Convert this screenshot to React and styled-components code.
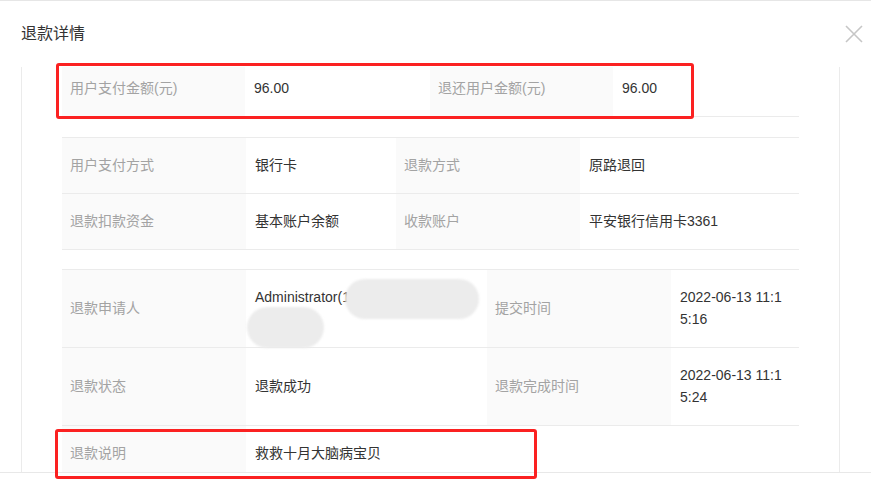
import React from "react";
import styled, { createGlobalStyle } from "styled-components";

const GlobalStyle = createGlobalStyle`
  html, body {
    margin: 0;
    padding: 0;
    background: #fff;
  }
  body {
    font-family: "Liberation Sans", "Noto Sans CJK SC", sans-serif;
    overflow: hidden;
  }
`;

const amountTable = {
  cols: "183px 185px 183px 186px",
  offset: -7,
  rows: [
    [
      ["用户支付金额(元)", "96.00"],
      ["退还用户金额(元)", "96.00"],
    ],
  ],
};

const methodTable = {
  cols: "184px 150px 184px 219px",
  offset: 20,
  rows: [
    [
      ["用户支付方式", "银行卡"],
      ["退款方式", "原路退回"],
    ],
    [
      ["退款扣款资金", "基本账户余额"],
      ["收款账户", "平安银行信用卡3361"],
    ],
  ],
};

// the applicant's number is masked in the screenshot
const Applicant = () => (
  <TwoLines>
    Administrator(1
    <Blur left={99} top={9} w={134} h={40} />
    <Blur left={1} top={37} w={77} h={41} />
  </TwoLines>
);

const statusTable = {
  cols: "184px 241px 184px 128px",
  offset: 19,
  rows: [
    [
      ["退款申请人", <Applicant key="a" />],
      ["提交时间", "2022-06-13 11:15:16"],
    ],
    [
      ["退款状态", "退款成功"],
      ["退款完成时间", "2022-06-13 11:15:24"],
    ],
    [["退款说明", "救救十月大脑病宝贝"]],
  ],
};

const InfoTable = ({ table }) => (
  <Table offset={table.offset}>
    {table.rows.map((row, i) => (
      <Row key={i} cols={table.cols}>
        {row.map(([label, value]) => (
          <React.Fragment key={label}>
            <Label>{label}</Label>
            <Value>{value}</Value>
          </React.Fragment>
        ))}
      </Row>
    ))}
  </Table>
);

export default function App() {
  return (
    <Modal>
      <GlobalStyle />
      <Header>
        <Title>退款详情</Title>
        <CloseButton aria-label="close">
          <svg width="18" height="18" viewBox="0 0 18 18">
            <path
              d="M1 1 L17 17 M17 1 L1 17"
              stroke="#c6c6c6"
              strokeWidth="1.6"
              fill="none"
            />
          </svg>
        </CloseButton>
      </Header>
      <Body>
        <Content>
          <InfoTable table={amountTable} />
          <InfoTable table={methodTable} />
          <InfoTable table={statusTable} />
        </Content>
      </Body>
      <Footer />
      <Mark left={56} top={62} w={638} h={56} />
      <Mark left={55} top={428} w={482} h={50} />
    </Modal>
  );
}

const Modal = styled.div`
  position: relative;
  width: 871px;
  height: 481px;
  border-top: 1px solid #e6e6e6;
  box-sizing: border-box;
  display: flex;
  flex-direction: column;
  overflow: hidden;
`;

const Header = styled.div`
  height: 66px;
  flex-shrink: 0;
  display: flex;
  align-items: center;
  justify-content: space-between;
  padding: 0 8px 1px 21px;
  box-sizing: border-box;
`;

const Title = styled.div`
  font-size: 16px;
  color: #333;
  line-height: 22px;
`;

const CloseButton = styled.button`
  border: none;
  background: none;
  padding: 0;
  width: 18px;
  height: 18px;
  display: flex;
  cursor: pointer;
`;

const Body = styled.div`
  margin-left: 21px;
  width: 819px;
  height: 405px;
  flex-shrink: 0;
  border-left: 1px solid #ebebeb;
  border-right: 1px solid #ebebeb;
  box-sizing: border-box;
  overflow: hidden;
`;

const Content = styled.div`
  padding-left: 40px;
  width: 777px;
  box-sizing: border-box;
`;

const Table = styled.div`
  margin-top: ${({ offset }) => offset}px;
  border-top: 1px solid #ebebeb;
  width: 737px;
`;

const Row = styled.div`
  display: grid;
  grid-template-columns: ${({ cols }) => cols};
  border-bottom: 1px solid #ebebeb;
`;

const Label = styled.div`
  background: #fafafa;
  color: #a3a3a3;
  font-size: 14px;
  line-height: 22px;
  padding: 16px 8px 17px;
  display: flex;
  align-items: center;
`;

const Value = styled.div`
  position: relative;
  color: #333;
  font-size: 14px;
  line-height: 22px;
  padding: 16px 12px 17px 9px;
  word-break: break-all;
  display: flex;
  align-items: center;
`;

const TwoLines = styled.span`
  display: block;
  min-height: 44px;
`;

const Blur = styled.span`
  position: absolute;
  left: ${({ left }) => left}px;
  top: ${({ top }) => top}px;
  width: ${({ w }) => w}px;
  height: ${({ h }) => h}px;
  border-radius: ${({ h }) => h / 2}px;
  background: #ececec;
  filter: blur(1px);
  z-index: 1;
`;

const Footer = styled.div`
  flex: 1;
  border-top: 1px solid #e8e8e8;
`;

const Mark = styled.div`
  position: absolute;
  left: ${({ left }) => left}px;
  top: ${({ top }) => top}px;
  width: ${({ w }) => w}px;
  height: ${({ h }) => h}px;
  border: 3px solid #fb2121;
  border-radius: 3px;
  box-sizing: border-box;
  pointer-events: none;
`;
